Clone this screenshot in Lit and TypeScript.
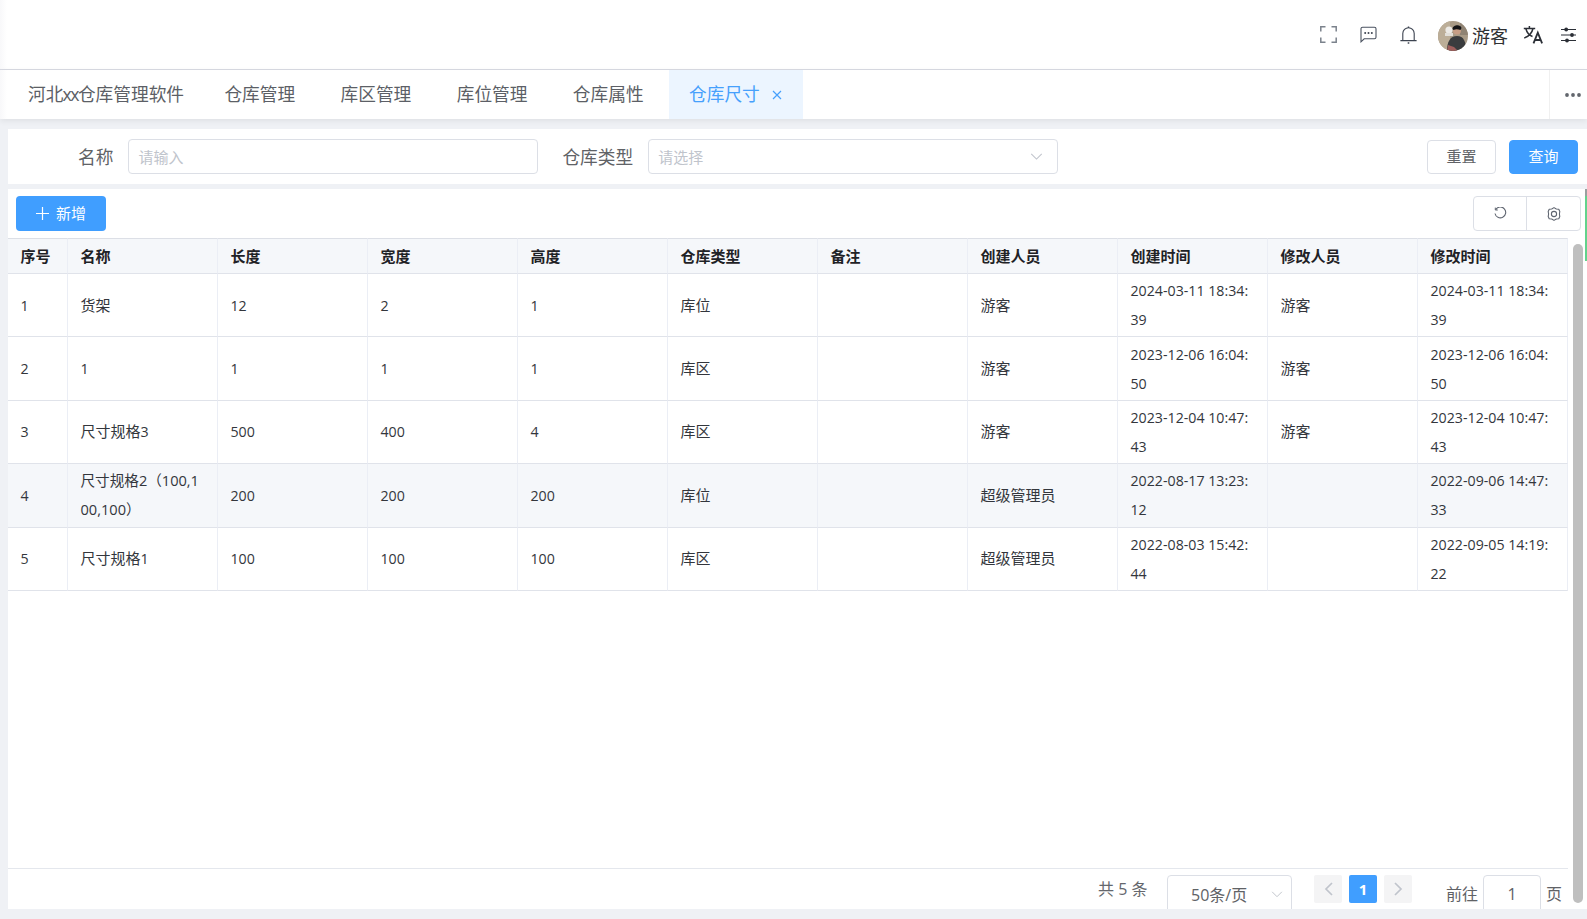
import { LitElement, html, css } from "lit";
import { customElement } from "lit/decorators.js";

const cols = ["序号","名称","长度","宽度","高度","仓库类型","备注","创建人员","创建时间","修改人员","修改时间"];
const rows = [
  ["1","货架","12","2","1","库位","","游客","2024-03-11 18:34:39","游客","2024-03-11 18:34:39"],
  ["2","1","1","1","1","库区","","游客","2023-12-06 16:04:50","游客","2023-12-06 16:04:50"],
  ["3","尺寸规格3","500","400","4","库区","","游客","2023-12-04 10:47:43","游客","2023-12-04 10:47:43"],
  ["4","尺寸规格2（100,100,100）","200","200","200","库位","","超级管理员","2022-08-17 13:23:12","","2022-09-06 14:47:33"],
  ["5","尺寸规格1","100","100","100","库区","","超级管理员","2022-08-03 15:42:44","","2022-09-05 14:19:22"],
];
const tabs = ["仓库管理","库区管理","库位管理","仓库属性"];

/* CJK runs are slightly larger than the Latin runs in the reference's font */
const runs = (t: string) =>
  t.split(/([\u3000-\u9fff\uff00-\uffef]+)/).map((p, i) => (i % 2 ? html`<span class="cjk">${p}</span>` : p));
const isWrapped = (t: string) => t.includes("（");

@customElement("app-root")
export class AppRoot extends LitElement {
  static styles = css`
    :host { display:flex; flex-direction:column; height:919px; width:1587px; overflow:hidden; position:relative;
      background:#eff1f5; font-family:"Open Sans","Noto Sans CJK SC",sans-serif; color:#606266; font-size:14px; }
    svg { display:block; }
    .top { height:70px; box-sizing:border-box; flex:none; background:linear-gradient(90deg,#f8f8fa 0,#fff 7px); border-bottom:1px solid #d8dae2; display:flex; align-items:center; justify-content:flex-end; }
    .top .ic { margin-right:23px; }
    .top .bell { margin-right:21px; }
    .avatar { width:30px; height:30px; border-radius:50%; overflow:hidden; margin-right:4px; margin-top:2px; }
    .user { font-size:18px; color:#303133; margin-right:14px; width:37px; white-space:nowrap; }
    .top .trans { margin-right:18px; }
    .top .sliders { margin-right:11px; }
    .tabs { height:49px; flex:none; background:linear-gradient(90deg,#f8f8fa 0,#fff 7px); display:flex; padding-left:8px; gap:5.4px; box-shadow:0 2px 6px rgba(0,0,0,.07); position:relative; z-index:1; }
    .tab { padding:0 20px; font-size:17.7px; line-height:49px; color:#5c5f66; white-space:nowrap; display:flex; align-items:center; }
    .tab.first { width:191px; box-sizing:border-box; }
    .xx { letter-spacing:-1.5px; margin-left:-1px; }
    .tab.on { background:#ecf5ff; color:#46a0fc; padding-right:21px; }
    .tab.on svg { margin-left:12px; }
    .more { margin-left:auto; width:38px; border-left:1px solid #f0f0f0; display:flex; align-items:center; justify-content:center; padding-left:8px; box-sizing:border-box; }
    .filter { margin:10px 0 5px 8px; height:55px; flex:none; background:#fff; display:flex; align-items:center; font-size:17.7px; }
    .lab { white-space:nowrap; color:#606266; line-height:35px; padding-top:1px; }
    .inp { box-sizing:border-box; height:35px; width:410px; border:1px solid #dcdfe6; border-radius:4px; margin-left:15px; padding:0 14px 1px 9px; font-size:15px; color:#c0c4cc; display:flex; align-items:center; justify-content:space-between; }
    .filter .l1 { margin-left:70px; }
    .filter .l2 { margin-left:24px; }
    .btn { box-sizing:border-box; height:34px; width:69px; border:1px solid #dcdfe6; border-radius:4px; font-size:15px; display:flex; align-items:center; justify-content:center; color:#606266; background:#fff; padding-bottom:2px; }
    .btn.reset { margin-left:auto; }
    .btn.primary { background:#409eff; border-color:#409eff; color:#fff; margin-left:13px; margin-right:9px; }
    .panel { flex:1; min-height:0; margin:0 0 10px 8px; background:#fff; display:flex; flex-direction:column; }
    .bar { height:49px; flex:none; display:flex; align-items:flex-start; padding:7px 6px 0 8px; box-sizing:border-box; justify-content:space-between; }
    .add { box-sizing:border-box; width:90px; height:35px; border-radius:4px; background:#409eff; color:#fff; font-size:15px; display:flex; align-items:center; justify-content:center; gap:7px; padding-bottom:2px; }
    .add svg { margin-top:2px; }
    .group { display:flex; height:35px; box-sizing:border-box; border:1px solid #dcdfe6; border-radius:4px; width:108px; }
    .group div { display:flex; align-items:center; justify-content:center; }
    .group div:first-child { width:52px; flex:none; }
    .group div + div { flex:1; border-left:1px solid #dcdfe6; }
    .tw { flex:1; min-height:0; width:1560px; }
    table { border-collapse:separate; border-spacing:0; table-layout:fixed; width:1560px; font-size:14.2px; color:#303133; }
    th, td { border-right:1.5px solid #ebeef5; border-bottom:1.5px solid #e0e3ea; padding:0 12.5px; text-align:left; box-sizing:border-box; word-break:break-all; }
    th { height:36px; background:#f5f7fa; font-weight:700; border-top:1px solid #dcdfe6; color:#1f2226; padding-bottom:2px; }
    td { height:63.4px; line-height:29px; color:#33363c; }
    td.mix { font-size:14.6px; }
    .cjk { font-size:15px; }
    tr.hl td { background:#f5f7fa; }
    .pager { height:41px; flex:none; width:1560px; border-top:1.5px solid #e4e7ed; box-sizing:border-box; display:flex; align-items:flex-start; overflow:hidden; color:#606266; }
    .total { margin-left:1090px; margin-top:8px; line-height:24px; white-space:pre; width:69px; color:#64676d; font-size:16px; }
    .ps { box-sizing:border-box; height:38px; width:125px; border:1px solid #dcdfe6; border-radius:4px; margin-top:6px; display:flex; align-items:center; justify-content:space-between; padding:0 8px 0 23px; flex:none; font-size:16px; }
    .ps svg { width:12px; height:6.5px; }
    .pg { width:28px; height:28px; margin-top:6px; border-radius:2px; background:#f4f4f5; display:flex; align-items:center; justify-content:center; flex:none; margin-left:7px; font-weight:700; font-size:15px; }
    .pg.prev { margin-left:22px; }
    .pg.on { background:#409eff; color:#fff; }
    .goto { margin-left:34px; margin-top:13px; line-height:24px; white-space:nowrap; font-size:16px; }
    .gi { box-sizing:border-box; height:38px; width:58px; border:1px solid #dcdfe6; border-radius:4px; margin:6px 5px 0 5px; display:flex; align-items:center; justify-content:center; flex:none; font-size:16px; }
    .goto.p { margin-left:0; }
    .thumb { position:absolute; left:1573px; top:244px; width:10px; height:659px; background:#bfbfbf; border-radius:5px; }
    .edge { position:absolute; left:1585px; top:189px; width:2px; height:72px; background:linear-gradient(#9aa0a0 0 10%, #62d38c 10% 100%); }
  `;

  icon(kind: string) {
    switch (kind) {
      case "full": return html`<svg class="ic" width="17" height="17" viewBox="0 0 17 17" fill="none" stroke="#7b828c" stroke-width="1.5"><path d="M.8 5.5V.8h4.700M11.500.8h4.700v4.700M16.200 11.500v4.700h-4.700M5.500 16.200H.8v-4.700"/></svg>`;
      case "chat": return html`<svg class="ic" width="17" height="17" viewBox="0 0 17 17" fill="none" stroke="#4a5260" stroke-width="1.1"><path d="M1 15.800V2.800A1.600 1.600 0 0 1 2.600 1.200h11.800A1.600 1.600 0 0 1 16 2.800v8.400a1.600 1.600 0 0 1-1.600 1.600H4.200z"/><g fill="#3c4350" stroke="none"><circle cx="5.2" cy="7" r="1"/><circle cx="8.5" cy="7" r="1"/><circle cx="11.8" cy="7" r="1"/></g></svg>`;
      case "bell": return html`<svg class="ic bell" width="17" height="18" viewBox="0 0 17 18" fill="none" stroke="#3c4350" stroke-width="1.1"><path d="M.4 14.600h16.200M2.800 14.600V7.500a5.700 5.700 0 0 1 11.400 0v7.100"/><path d="M8.500 1.900V.6M7.700 17h1.600" stroke-width="1.4"/></svg>`;
      case "trans": return html`<svg class="ic trans" width="20" height="19" viewBox="0 0 20 19" fill="none" stroke="#2b2f36" stroke-width="1.5"><path d="M.8 3.500h11.400M6.400 1v2.500M10 3.500C9 8 5.500 11.500 1.200 13M2.800 3.500C4 8 6.500 10.500 9.500 11.500"/><path d="M10.500 18.400 14.800 7.600l4.300 10.800M12 15h5.600" stroke-width="1.8"/></svg>`;
      case "sliders": return html`<svg class="ic sliders" width="15" height="16" viewBox="0 0 15 16" fill="none" stroke="#2b2f36" stroke-width="1.2"><path d="M0 2.500h15M0 8h15M0 13.500h15"/><g fill="#2b2f36" stroke="none"><circle cx="5.200" cy="2.500" r="1.900"/><circle cx="11" cy="8" r="1.900"/><circle cx="6" cy="13.500" r="1.900"/></g></svg>`;
      case "chev": return html`<svg width="13" height="7" viewBox="0 0 14 8" fill="none" stroke="#c0c4cc" stroke-width="1.2"><path d="M1 1l6 6 6-6"/></svg>`;
      case "x": return html`<svg width="10" height="10" viewBox="0 0 10 10" fill="none" stroke="#46a0fc" stroke-width="1.2"><path d="M1 1l8 8M9 1l-8 8"/></svg>`;
      case "plus": return html`<svg width="13" height="13" viewBox="0 0 13 13" fill="none" stroke="#fff" stroke-width="1.2"><path d="M6.500 0v13M0 6.500h13"/></svg>`;
      case "refresh": return html`<svg width="13" height="13" viewBox="0 0 13 13" fill="none" stroke="#5f6570" stroke-width="1.1"><path d="M1.700 2.600A5.400 5.400 0 1 1 1 6.500"/><path d="M1.300.6v2.400h2.500" stroke-width="1"/></svg>`;
      case "gear": return html`<svg width="14" height="14" viewBox="0 0 14 14" fill="none" stroke="#5f6570" stroke-width="1.1" stroke-linejoin="round"><path d="M7 .6 9.300 2l2.500.3 1 2.200L12.400 7l.4 2.500-1 2.200-2.500.3L7 13.400 4.700 12l-2.500-.3-1-2.200L1.600 7l-.4-2.500 1-2.200L4.700 2z"/><circle cx="7" cy="7" r="2.600"/></svg>`;
      case "left": return html`<svg width="9" height="14" viewBox="0 0 9 14" fill="none" stroke="#c0c4cc" stroke-width="1.7"><path d="M8 1 2 7l6 6"/></svg>`;
      case "right": return html`<svg width="9" height="14" viewBox="0 0 9 14" fill="none" stroke="#c0c4cc" stroke-width="1.7"><path d="M1 1l6 6-6 6"/></svg>`;
    }
    return html``;
  }

  render() {
    return html`
      <div class="top">
        ${this.icon("full")}${this.icon("chat")}${this.icon("bell")}
        <svg class="avatar" viewBox="0 0 30 30">
          <rect width="30" height="30" fill="#a89a86"/>
          <rect width="12" height="30" fill="#bcae98"/>
          <circle cx="11" cy="9" r="3.6" fill="#eceae6"/>
          <rect x="7" y="12" width="8" height="3" fill="#e2dfd9"/>
          <rect x="22" width="8" height="14" fill="#8f8373"/>
          <path d="M9 30c0-9 3-15 10-15s9 6 9 15z" fill="#3a3c3e"/>
          <circle cx="19" cy="9.5" r="4" fill="#c79e86"/>
          <path d="M14.500 8c0-4 8-5.500 9-1l-1 2c-3-1-5-1-7 0z" fill="#141416"/>
          <path d="M10 24l6 2 4 4H9z" fill="#9f5f5c"/>
        </svg>
        <div class="user">游客</div>
        ${this.icon("trans")}${this.icon("sliders")}
      </div>
      <div class="tabs">
        <div class="tab first">河北<span class="xx">xx</span>仓库管理软件</div>
        ${tabs.map(t => html`<div class="tab">${t}</div>`)}
        <div class="tab on">仓库尺寸${this.icon("x")}</div>
        <div class="more"><svg width="16" height="4" viewBox="0 0 16 4" fill="#62666d"><circle cx="2" cy="2" r="1.9"/><circle cx="8" cy="2" r="1.9"/><circle cx="14" cy="2" r="1.9"/></svg></div>
      </div>
      <div class="filter">
        <span class="lab l1">名称</span><div class="inp">请输入</div>
        <span class="lab l2">仓库类型</span><div class="inp">请选择${this.icon("chev")}</div>
        <div class="btn reset">重置</div><div class="btn primary">查询</div>
      </div>
      <div class="panel">
        <div class="bar">
          <div class="add">${this.icon("plus")}新增</div>
          <div class="group"><div>${this.icon("refresh")}</div><div>${this.icon("gear")}</div></div>
        </div>
        <div class="tw">
          <table>
            <colgroup><col style="width:60px">${cols.slice(1).map(() => html`<col style="width:150px">`)}</colgroup>
            <thead><tr>${cols.map(c => html`<th>${runs(c)}</th>`)}</tr></thead>
            <tbody>${rows.map((r, i) => html`<tr class=${i === 3 ? "hl" : ""}>${r.map(c =>
              isWrapped(c) ? html`<td class="mix">${c}</td>` : html`<td>${runs(c)}</td>`)}</tr>`)}</tbody>
          </table>
        </div>
        <div class="pager">
          <div class="total">共 5 条</div>
          <div class="ps">50条/页${this.icon("chev")}</div>
          <div class="pg prev">${this.icon("left")}</div>
          <div class="pg on">1</div>
          <div class="pg">${this.icon("right")}</div>
          <div class="goto">前往</div><div class="gi">1</div><div class="goto p">页</div>
        </div>
      </div>
      <div class="thumb"></div>
      <div class="edge"></div>
    `;
  }
}
